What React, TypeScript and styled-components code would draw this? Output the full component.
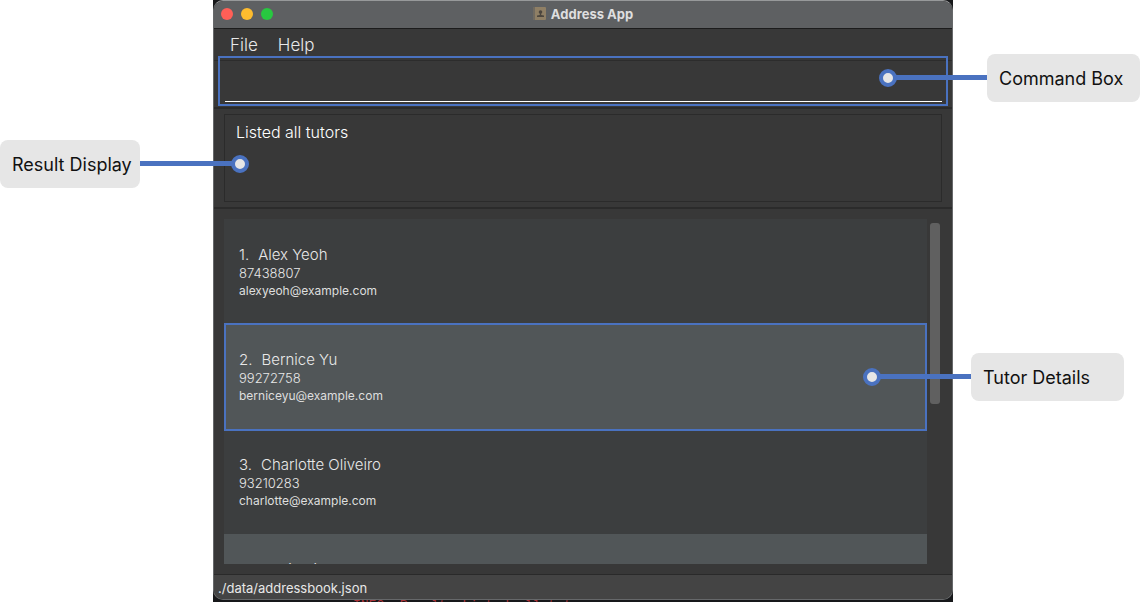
import React from "react";
import styled, { createGlobalStyle, css } from "styled-components";

const accent = "#4a72c0";

const GlobalStyle = createGlobalStyle`
  *, *::before, *::after { box-sizing: border-box; }
  body {
    margin: 0;
    background: #fff;
    font-family: Inter, "Liberation Sans", sans-serif;
    overflow: hidden;
  }
`;

const Page = styled.div`
  display: grid;
  grid-template-columns: 213px minmax(0, 1fr) 187px;
  align-items: start;
`;

const LeftNotes = styled.aside`
  display: flex;
  flex-direction: column;
  align-items: flex-start;
  padding-top: 140px;
`;

const RightNotes = styled.aside`
  display: flex;
  flex-direction: column;
  gap: 251px;
  padding: 54px 0 0 18px;
`;

const Callout = styled.div<{ $width: number; $reach: number; $side: "left" | "right"; $end?: boolean }>`
  position: relative;
  z-index: 3;
  align-self: ${(p) => (p.$end ? "flex-end" : "flex-start")};
  width: ${(p) => p.$width}px;
  height: 48px;
  padding: 12px;
  border-radius: 8px;
  background: #e6e6e6;
  color: #111;
  font-size: 18px;
  line-height: 26px;
  white-space: nowrap;

  &::before {
    content: "";
    position: absolute;
    top: 21px;
    ${(p) => (p.$side === "left" ? "left" : "right")}: 100%;
    width: ${(p) => p.$reach}px;
    height: 5px;
    background: ${accent};
  }

  &::after {
    content: "";
    position: absolute;
    top: 15px;
    ${(p) => (p.$side === "left" ? "left" : "right")}: calc(100% + ${(p) => p.$reach - 9}px);
    width: 18px;
    height: 18px;
    border: 4px solid ${accent};
    border-radius: 50%;
    background: #e6e6e6;
  }
`;

const Backdrop = styled.div`
  display: flex;
  flex-direction: column;
  height: calc(100vh - 1px);
  min-height: 420px;
  background: #17181a;
`;

const Window = styled.main`
  flex: 1;
  min-height: 0;
  display: flex;
  flex-direction: column;
  border: 1px solid #66686a;
  border-top-color: #97999a;
  border-radius: 10px;
  background: #383838;
  color: #e8e8e8;
`;

const TerminalLine = styled.div`
  height: 2px;
  padding-left: 140px;
  overflow: hidden;
  color: #a83238;
  font: 13px/11px "Liberation Mono", monospace;
  white-space: nowrap;
`;

const TitleBar = styled.header`
  position: relative;
  display: flex;
  align-items: center;
  justify-content: center;
  height: 28px;
  padding-bottom: 2px;
  border-bottom: 1px solid #1c1c1c;
  border-radius: 9px 9px 0 0;
  background: #5e6062;
`;

const Lights = styled.div`
  position: absolute;
  left: 7px;
  top: 7px;
  display: flex;
  gap: 8px;
`;

const Light = styled.button<{ $color: string }>`
  width: 12px;
  height: 12px;
  padding: 0;
  border: 0;
  border-radius: 50%;
  background: ${(p) => p.$color};
`;

const Title = styled.h1`
  display: flex;
  align-items: center;
  gap: 5px;
  margin: 0;
  color: #dededf;
  font-size: 13px;
  line-height: 16px;
  font-weight: 700;
`;

const MenuBar = styled.nav`
  display: flex;
  align-items: center;
  gap: 20px;
  height: 32px;
  padding: 0 16px;
  border-bottom: 1px solid #2c2c2c;
`;

const MenuItem = styled.button`
  padding: 0;
  border: 0;
  background: none;
  color: #e8e8e8;
  font: 300 17px/24px Inter, sans-serif;
`;

const CommandPane = styled.form`
  position: relative;
  height: 48px;
  padding: 0 10px 6px 11px;
  border-bottom: 2px solid #2b2b2b;

  &::after {
    content: "";
    position: absolute;
    inset: -5px 4px 1px;
    border: 2px solid ${accent};
    pointer-events: none;
  }
`;

const CommandInput = styled.input`
  display: block;
  width: 100%;
  height: 41px;
  padding: 0 8px;
  border: 0;
  border-bottom: 1px solid #fff;
  outline: 0;
  background: transparent;
  color: #fff;
  font: 300 17px/24px Inter, sans-serif;
`;

const ResultPane = styled.section`
  padding: 5px 10px;
  border-bottom: 2px solid #2b2b2b;
`;

const ResultBox = styled.output`
  display: block;
  height: 88px;
  padding: 5px 11px;
  border: 1px solid #2b2b2b;
  font-size: 16px;
  font-weight: 300;
  line-height: 24px;
  color: #fff;
`;

const ListPane = styled.section`
  flex: 1;
  min-height: 0;
  display: flex;
  gap: 3px;
  padding: 10px 12px 10px 10px;
`;

const List = styled.ol`
  flex: 1;
  margin: 0;
  padding: 0;
  list-style: none;
  overflow: hidden;
`;

const Row = styled.li<{ $selected?: boolean }>`
  position: relative;
  height: 105px;
  padding: 26px 15px;
  background: #3c3e3f;
  font-weight: 300;

  &:nth-child(even) { background: #515658; }

  ${(p) =>
    p.$selected &&
    css`
      z-index: 1;
      &::after {
        content: "";
        position: absolute;
        inset: -1px 0 -2px;
        border: 2px solid ${accent};
      }
    `}
`;

const Name = styled.h2`
  display: flex;
  gap: 9px;
  margin: 0;
  font-size: 15px;
  font-weight: 300;
  line-height: 20px;
`;

const Phone = styled.p`
  margin: 0;
  font-size: 13px;
  line-height: 17px;
`;

const Email = styled(Phone)`
  font-size: 12px;
  font-weight: 400;
  color: #dedede;
`;

const Track = styled.div`
  width: 10px;
  padding-top: 4px;
`;

const Thumb = styled.div`
  height: 53%;
  border-radius: 3px;
  background: #606060;
`;

const StatusBar = styled.footer`
  height: 25px;
  padding: 0 4px;
  border-top: 1px solid #2a2a2a;
  border-radius: 0 0 9px 9px;
  background: #444;
  font-size: 13px;
  font-weight: 400;
  line-height: 26px;
`;

const tutors = [
  { name: "Alex Yeoh", phone: "87438807", email: "alexyeoh@example.com" },
  { name: "Bernice Yu", phone: "99272758", email: "berniceyu@example.com" },
  { name: "Charlotte Oliveiro", phone: "93210283", email: "charlotte@example.com" },
  { name: "David Li", phone: "91031282", email: "lidavid@example.com" },
];

function BookIcon() {
  return (
    <svg width="13" height="13" viewBox="0 0 13 13" aria-hidden="true">
      <rect width="13" height="13" rx="1" fill="#8f7f65" />
      <rect width="2" height="13" fill="#706a60" />
      <circle cx="7.5" cy="5" r="1.8" fill="#4c463e" />
      <path d="M6.8 6h1.4v2l2.8.6V10H4V8.600l2.800-.6z" fill="#4c463e" />
    </svg>
  );
}

export default function App() {
  return (
    <>
      <GlobalStyle />
      <Page>
        <LeftNotes>
          <Callout $side="left" $width={140} $reach={100}>Result Display</Callout>
        </LeftNotes>
        <Backdrop>
          <Window>
            <TitleBar>
              <Lights>
                <Light $color="#ff5f57" aria-label="Close" />
                <Light $color="#febc2e" aria-label="Minimize" />
                <Light $color="#28c840" aria-label="Zoom" />
              </Lights>
              <Title><BookIcon />Address App</Title>
            </TitleBar>
            <MenuBar>
              <MenuItem>File</MenuItem>
              <MenuItem>Help</MenuItem>
            </MenuBar>
            <CommandPane onSubmit={(e) => e.preventDefault()}>
              <CommandInput aria-label="Command" />
            </CommandPane>
            <ResultPane>
              <ResultBox>Listed all tutors</ResultBox>
            </ResultPane>
            <ListPane>
              <List>
                {tutors.map((t, i) => (
                  <Row key={t.email} $selected={i === 1}>
                    <Name><span>{i + 1}.</span><span>{t.name}</span></Name>
                    <Phone>{t.phone}</Phone>
                    <Email>{t.email}</Email>
                  </Row>
                ))}
              </List>
              <Track><Thumb /></Track>
            </ListPane>
            <StatusBar>./data/addressbook.json</StatusBar>
          </Window>
          <TerminalLine aria-hidden="true">INFO: Result: Listed all tutors</TerminalLine>
        </Backdrop>
        <RightNotes>
          <Callout $side="right" $width={153} $reach={99} $end>Command Box</Callout>
          <Callout $side="right" $width={153} $reach={99}>Tutor Details</Callout>
        </RightNotes>
      </Page>
    </>
  );
}
